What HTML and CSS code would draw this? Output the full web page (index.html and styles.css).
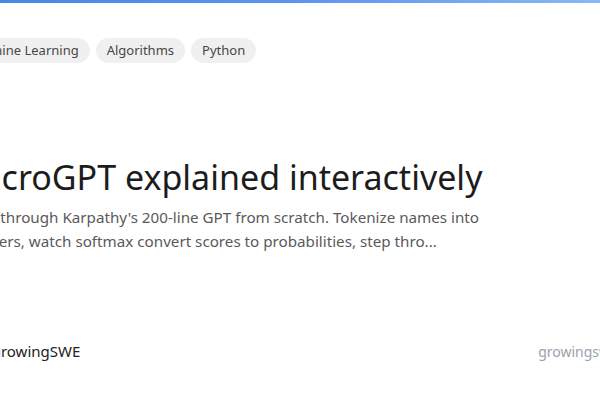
FILE: index.html
```html
<!DOCTYPE html>
<html>
<head>
<meta charset="utf-8">
<link rel="stylesheet" href="styles.css">
</head>
<body>
<div class="bar"></div>
<div class="card">
  <div class="tags">
    <span class="tag">Machine Learning</span>
    <span class="tag">Algorithms</span>
    <span class="tag">Python</span>
  </div>
  <h1 class="title">MicroGPT explained interactively</h1>
  <p class="desc">Walk through Karpathy's 200-line GPT from scratch. Tokenize names into integers, watch softmax convert scores to probabilities, step thro...</p>
  <div class="footer">
    <div class="author">
      <span class="avatar"></span>
      <span class="brand">GrowingSWE</span>
    </div>
    <span class="site">growingswe.com</span>
  </div>
</div>
</body>
</html>
```
FILE: styles.css
```css
html, body {
  margin: 0;
  padding: 0;
  background: #fff;
  overflow: hidden;
  width: 600px;
  height: 400px;
}
body {
  font-family: "Noto Sans", sans-serif;
}
.bar {
  height: 3px;
  background: linear-gradient(90deg, #4a86e8 0%, #5b95ee 50%, #8ab8f5 100%);
}
.card {
  margin-left: -38px;
  width: 688px;
  padding-top: 35px;
}
.tags {
  display: flex;
  gap: 6px;
  margin-left: -4px;
}
.tag {
  background: #f0f0f0;
  border-radius: 999px;
  padding: 4px 11px;
  font-size: 13px;
  line-height: 17px;
  color: #474747;
}
.title {
  margin: 92px 0 0;
  font-size: 34px;
  font-weight: 400;
  line-height: 44px;
  color: #1c1c1c;
  white-space: nowrap;
}
.desc {
  margin: 6px 0 0;
  font-size: 15.2px;
  line-height: 24px;
  color: #5a5a5a;
  width: 525px;
}
.footer {
  margin-top: 88px;
  display: flex;
  justify-content: space-between;
  align-items: center;
}
.author {
  display: flex;
  align-items: center;
  gap: 8px;
}
.avatar {
  width: 20px;
  height: 20px;
  border-radius: 50%;
  background: #4a86e8;
}
.brand {
  font-size: 15px;
  color: #222;
}
.site {
  font-size: 14px;
  color: #9aa1ab;
}
```
